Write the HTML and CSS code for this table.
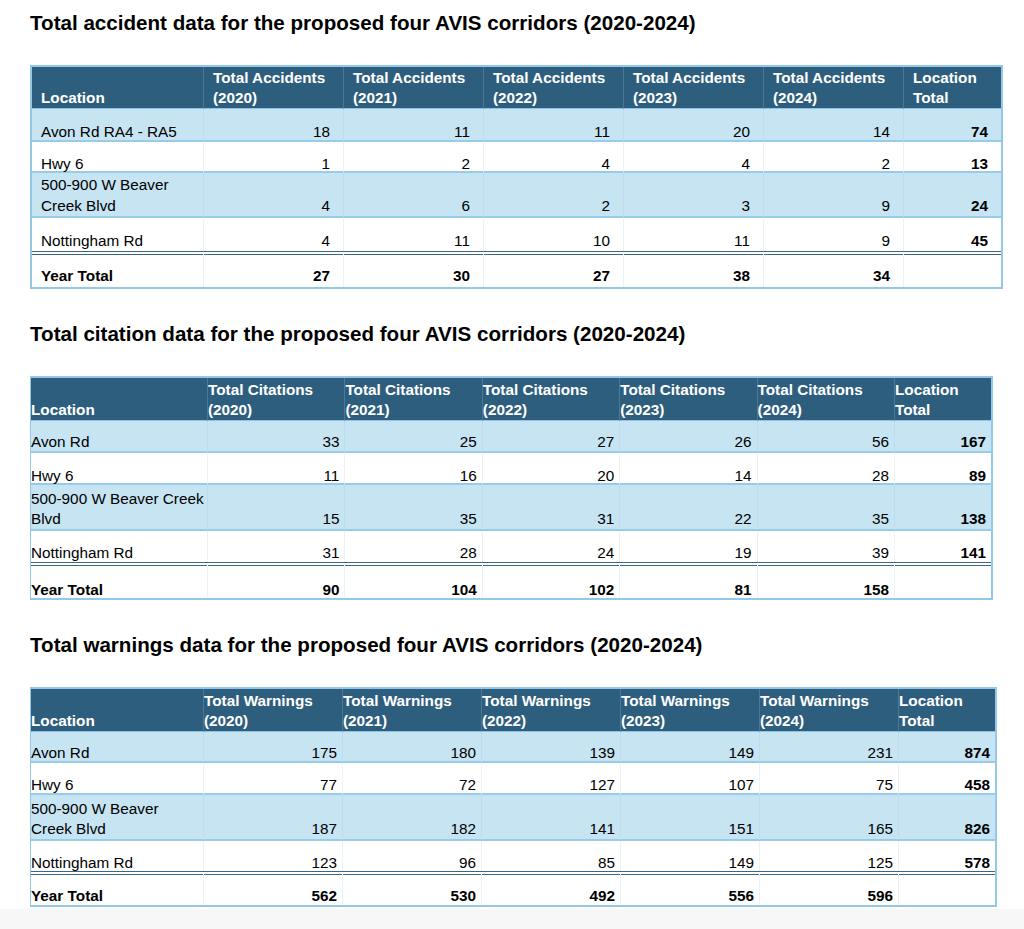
FILE: index.html
```html
<!DOCTYPE html>
<html lang="en">
<head>
<meta charset="utf-8">
<title>AVIS corridors data</title>
<link rel="stylesheet" href="styles.css">
</head>
<body>
<div class="page">
  <section class="report">
    <h2 class="report-title">Total accident data for the proposed four AVIS corridors (2020-2024)</h2>
    <table class="data-table t-acc">
      <thead>
        <tr>
          <th class="c-loc">Location</th>
          <th class="c-yr">Total Accidents<br>(2020)</th>
          <th class="c-yr">Total Accidents<br>(2021)</th>
          <th class="c-yr">Total Accidents<br>(2022)</th>
          <th class="c-yr">Total Accidents<br>(2023)</th>
          <th class="c-yr">Total Accidents<br>(2024)</th>
          <th class="c-tot">Location<br>Total</th>
        </tr>
      </thead>
      <tbody>
        <tr class="alt r1"><td>Avon Rd RA4 - RA5</td><td class="num">18</td><td class="num">11</td><td class="num">11</td><td class="num">20</td><td class="num">14</td><td class="num b">74</td></tr>
        <tr class="r2"><td>Hwy 6</td><td class="num">1</td><td class="num">2</td><td class="num">4</td><td class="num">4</td><td class="num">2</td><td class="num b">13</td></tr>
        <tr class="alt two"><td>500-900 W Beaver<br>Creek Blvd</td><td class="num">4</td><td class="num">6</td><td class="num">2</td><td class="num">3</td><td class="num">9</td><td class="num b">24</td></tr>
        <tr class="last"><td>Nottingham Rd</td><td class="num">4</td><td class="num">11</td><td class="num">10</td><td class="num">11</td><td class="num">9</td><td class="num b">45</td></tr>
        <tr class="total"><td>Year Total</td><td class="num">27</td><td class="num">30</td><td class="num">27</td><td class="num">38</td><td class="num">34</td><td class="num"></td></tr>
      </tbody>
    </table>
  </section>

  <section class="report">
    <h2 class="report-title">Total citation data for the proposed four AVIS corridors (2020-2024)</h2>
    <table class="data-table t-cit">
      <thead>
        <tr>
          <th class="c-loc">Location</th>
          <th class="c-yr">Total Citations<br>(2020)</th>
          <th class="c-yr">Total Citations<br>(2021)</th>
          <th class="c-yr">Total Citations<br>(2022)</th>
          <th class="c-yr">Total Citations<br>(2023)</th>
          <th class="c-yr">Total Citations<br>(2024)</th>
          <th class="c-tot">Location<br>Total</th>
        </tr>
      </thead>
      <tbody>
        <tr class="alt"><td>Avon Rd</td><td class="num">33</td><td class="num">25</td><td class="num">27</td><td class="num">26</td><td class="num">56</td><td class="num b">167</td></tr>
        <tr class="r2"><td>Hwy 6</td><td class="num">11</td><td class="num">16</td><td class="num">20</td><td class="num">14</td><td class="num">28</td><td class="num b">89</td></tr>
        <tr class="alt two"><td>500-900 W Beaver Creek<br>Blvd</td><td class="num">15</td><td class="num">35</td><td class="num">31</td><td class="num">22</td><td class="num">35</td><td class="num b">138</td></tr>
        <tr class="last"><td>Nottingham Rd</td><td class="num">31</td><td class="num">28</td><td class="num">24</td><td class="num">19</td><td class="num">39</td><td class="num b">141</td></tr>
        <tr class="total"><td>Year Total</td><td class="num">90</td><td class="num">104</td><td class="num">102</td><td class="num">81</td><td class="num">158</td><td class="num"></td></tr>
      </tbody>
    </table>
  </section>

  <section class="report">
    <h2 class="report-title">Total warnings data for the proposed four AVIS corridors (2020-2024)</h2>
    <table class="data-table t-warn">
      <thead>
        <tr>
          <th class="c-loc">Location</th>
          <th class="c-yr">Total Warnings<br>(2020)</th>
          <th class="c-yr">Total Warnings<br>(2021)</th>
          <th class="c-yr">Total Warnings<br>(2022)</th>
          <th class="c-yr">Total Warnings<br>(2023)</th>
          <th class="c-yr">Total Warnings<br>(2024)</th>
          <th class="c-tot">Location<br>Total</th>
        </tr>
      </thead>
      <tbody>
        <tr class="alt"><td>Avon Rd</td><td class="num">175</td><td class="num">180</td><td class="num">139</td><td class="num">149</td><td class="num">231</td><td class="num b">874</td></tr>
        <tr class="r2"><td>Hwy 6</td><td class="num">77</td><td class="num">72</td><td class="num">127</td><td class="num">107</td><td class="num">75</td><td class="num b">458</td></tr>
        <tr class="alt two"><td>500-900 W Beaver<br>Creek Blvd</td><td class="num">187</td><td class="num">182</td><td class="num">141</td><td class="num">151</td><td class="num">165</td><td class="num b">826</td></tr>
        <tr class="last"><td>Nottingham Rd</td><td class="num">123</td><td class="num">96</td><td class="num">85</td><td class="num">149</td><td class="num">125</td><td class="num b">578</td></tr>
        <tr class="total"><td>Year Total</td><td class="num">562</td><td class="num">530</td><td class="num">492</td><td class="num">556</td><td class="num">596</td><td class="num"></td></tr>
      </tbody>
    </table>
  </section>
</div>
<div class="band"></div>
</body>
</html>
```

FILE: styles.css
```css
* { box-sizing: border-box; }

html, body {
  margin: 0;
  padding: 0;
  background: #ffffff;
}

body {
  font-family: "Liberation Sans", Arial, Helvetica, sans-serif;
  color: #000;
}

.page {
  padding: 10px 0 0 30px;
}

.report {
  margin: 0 0 32px;
}

.report:last-child {
  margin-bottom: 0;
}

.report-title {
  font-size: 20.6px;
  line-height: 25px;
  font-weight: bold;
  margin: 0 0 30px;
  color: #000;
}

.data-table {
  border-collapse: separate;
  border-spacing: 0;
  table-layout: fixed;
  border: 2px solid #93c8e8;
  font-size: 15.3px;
  line-height: 21px;
}

.data-table th {
  background: #2e5e7e;
  color: #fff;
  font-weight: bold;
  text-align: left;
  vertical-align: bottom;
  line-height: 20px;
  height: 42px;
  padding: 0 4px 0 0;
  border-bottom: 1px solid #8fc3e3;
}

.data-table th + th {
  border-left: 1px solid rgba(255, 255, 255, 0.16);
}

.data-table td {
  vertical-align: bottom;
  height: 32px;
  padding: 0 5px 0 0;
  border-bottom: 2px solid #98cbea;
  white-space: nowrap;
}

.data-table td + td {
  border-left: 1px solid rgba(150, 190, 215, 0.18);
}

.data-table tr.alt td {
  background: #c6e4f2;
}

.data-table tr.two td {
  height: 46px;
}

.data-table tr.last td {
  border-bottom: none;
  height: 31px;
}

.data-table tr.total td {
  border-top: 4px double #3d6584;
  border-bottom: none;
  font-weight: bold;
  height: 36px;
  padding-bottom: 1px;
}

.data-table td.num {
  text-align: right;
}

.data-table td.b {
  font-weight: bold;
}

/* accidents table */
.t-acc { width: 973px; }
.t-acc .c-loc { width: 171px; }
.t-acc .c-yr { width: 140px; }
.t-acc th { padding-left: 9px; }
.t-acc td { padding-left: 9px; padding-right: 13px; }
.t-acc tr.r1 td { height: 33px; line-height: 17px; }
.t-acc tr.r2 td { height: 31px; line-height: 15px; }
.t-acc tr.two td { height: 45px; }
.t-acc tr.last td { height: 33px; }

/* citations table */
.t-cit { width: 963px; border-left-width: 1px; }
.t-cit .c-loc { width: 176px; }
.t-cit .c-yr { width: 137.4px; }
.t-cit th { height: 43px; }
.t-cit td { line-height: 19px; }
.t-cit tr.r2 td { line-height: 15px; }
.t-cit tr.two td { line-height: 20px; }
.t-cit tr.total td { line-height: 17px; padding-bottom: 0; }

/* warnings table */
.t-warn { width: 967px; border-left-width: 1px; }
.t-warn .c-loc { width: 172px; }
.t-warn .c-yr { width: 139px; }
.t-warn th { height: 43px; }
.t-warn td { height: 31px; line-height: 17px; }
.t-warn tr.r2 td { height: 32px; }
.t-warn tr.two td { line-height: 20px; }
.t-warn tr.last td { height: 30px; }
.t-warn tr.total td { height: 34px; padding-bottom: 0; line-height: 19px; }

.band {
  height: 21px;
  margin-top: 2px;
  background: #f7f7f7;
}
```
